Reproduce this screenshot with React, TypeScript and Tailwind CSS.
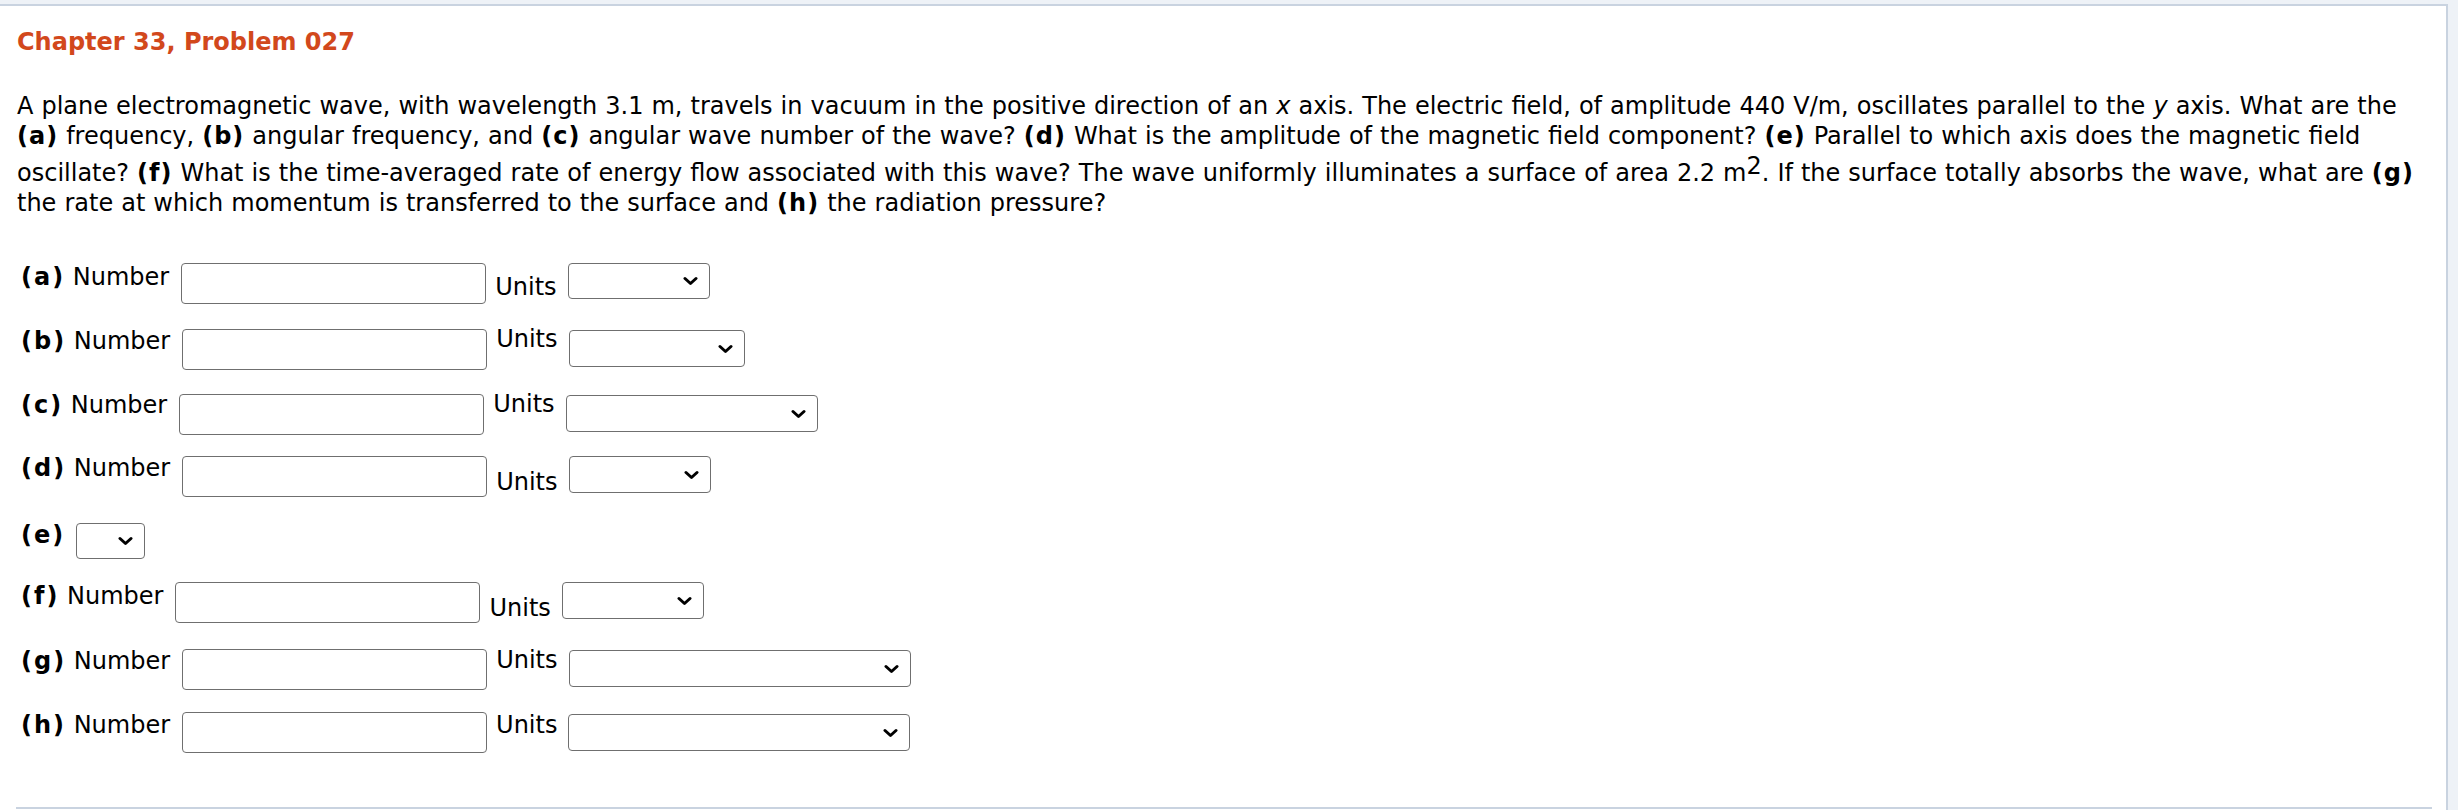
import * as React from 'react';

type Row = {
  tag: string;
  height: number;
  label: number;
  input?: number;
  units?: number;
  select: number;
  selectW: number;
  selectH: number;
};

const rows: Row[] = [
  { tag: 'a', height: 62, label: 0, input: 0, units: 10, select: 0, selectW: 142, selectH: 36 },
  { tag: 'b', height: 65, label: 2, input: 4, units: 0, select: 5, selectW: 176, selectH: 37 },
  { tag: 'c', height: 64, label: 1, input: 4, units: 0, select: 5, selectW: 252, selectH: 37 },
  { tag: 'd', height: 67, label: 0, input: 2, units: 14, select: 2, selectW: 142, selectH: 37 },
  { tag: 'e', height: 61, label: 0, select: 2, selectW: 69, selectH: 36 },
  { tag: 'f', height: 64, label: 0, input: 0, units: 12, select: 0, selectW: 142, selectH: 37 },
  { tag: 'g', height: 65, label: 1, input: 3, units: 0, select: 4, selectW: 342, selectH: 37 },
  { tag: 'h', height: 50, label: 0, input: 1, units: 0, select: 3, selectW: 342, selectH: 37 },
];

function Chevron() {
  return (
    <svg width="15" height="10" viewBox="0 0 15 10" className="pointer-events-none absolute right-[12px] top-1/2 -translate-y-1/2">
      <polyline points="2,2.5 7.5,7.5 13,2.5" fill="none" stroke="#000" strokeWidth="3" strokeLinecap="round" strokeLinejoin="round" />
    </svg>
  );
}

function Select({ w, h }: { w: number; h: number }) {
  return (
    <div className="relative" style={{ width: w, height: h }}>
      <select className="h-full w-full appearance-none rounded-[4px] border-[1.5px] border-[#6f6f6f] bg-white" />
      <Chevron />
    </div>
  );
}

function AnswerRow({ r }: { r: Row }) {
  return (
    <div className="flex items-start" style={{ height: r.height }}>
      <div className="text-[24px] leading-[28px]" style={{ marginTop: r.label }}>
        <b className="tracking-[2px]">({r.tag})</b>
        {r.input !== undefined ? ' Number' : ''}
      </div>
      {r.input !== undefined && (
        <>
          <input
            type="text"
            className="ml-[12px] h-[41px] w-[305px] rounded-[4px] border-[1.5px] border-[#6f6f6f] bg-white"
            style={{ marginTop: r.input }}
          />
          <div className="ml-[9px] text-[24px] leading-[28px]" style={{ marginTop: r.units }}>
            Units
          </div>
        </>
      )}
      <div className="ml-[11px]" style={{ marginTop: r.select }}>
        <Select w={r.selectW} h={r.selectH} />
      </div>
    </div>
  );
}

function B({ children }: { children: React.ReactNode }) {
  return <b className="tracking-[1px]">{children}</b>;
}

export default function App() {
  return (
    <div className="h-[810px] w-[2458px] overflow-hidden bg-[#eef2f7] font-['DejaVu_Sans',sans-serif] text-black">
      <div className="mr-[10px] mt-[4px] flex h-[806px] flex-col border-r-2 border-t-2 border-[#c9d3e0] bg-white">
        <div className="pl-[17px]">
          <h1 className="mt-[22px] text-[24px] font-bold leading-[28px] text-[#d2481c]">Chapter 33, Problem 027</h1>
          <p className="mt-[35px] whitespace-nowrap text-[24px] leading-[30px] [word-spacing:0.4px]">
            A plane electromagnetic wave, with wavelength 3.1 m, travels in vacuum in the positive direction of an <i>x</i> axis. The electric field, of amplitude 440 V/m, oscillates parallel to the <i>y</i> axis. What are the
            <br />
            <B>(a)</B> frequency, <B>(b)</B> angular frequency, and <B>(c)</B> angular wave number of the wave? <B>(d)</B> What is the amplitude of the magnetic field component? <B>(e)</B> Parallel to which axis does the magnetic field
            <br />
            oscillate? <B>(f)</B> What is the time-averaged rate of energy flow associated with this wave? The wave uniformly illuminates a surface of area 2.2 m<span className="align-[7px]">2</span>. If the surface totally absorbs the wave, what are <B>(g)</B>
            <br />
            the rate at which momentum is transferred to the surface and <B>(h)</B> the radiation pressure?
          </p>
        </div>
        <div className="mt-[45px] pl-[21px]">
          {rows.map((r) => (
            <AnswerRow key={r.tag} r={r} />
          ))}
        </div>
        <div className="mb-[1px] ml-[16px] mr-[14px] mt-auto h-[2px] bg-[#c9d3e0]" />
      </div>
    </div>
  );
}
